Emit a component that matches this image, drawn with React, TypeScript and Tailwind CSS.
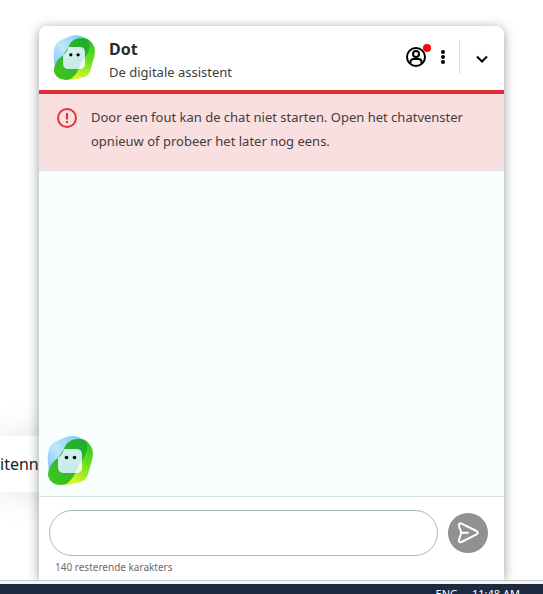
import { useState } from "react"

const MAX_LENGTH = 140

function DotAvatar({ id, className }: { id: string; className: string }) {
    return (
        <svg viewBox="0 0 46 50" className={className} role="img" aria-label="Dot">
            <defs>
                <linearGradient id={`${id}-sky`} x1="0" y1="0.7" x2="0.8" y2="0">
                    <stop offset="0" stopColor="#8fc8ff" />
                    <stop offset="0.4" stopColor="#bfe6fb" />
                    <stop offset="1" stopColor="#86cdf4" />
                </linearGradient>
                <linearGradient id={`${id}-lime`} x1="0.8" y1="0" x2="0.5" y2="1">
                    <stop offset="0" stopColor="#2fc02a" />
                    <stop offset="0.5" stopColor="#6ae01c" />
                    <stop offset="1" stopColor="#dcf828" />
                </linearGradient>
                <linearGradient id={`${id}-leaf`} x1="0" y1="1" x2="1" y2="0">
                    <stop offset="0" stopColor="#42c81c" />
                    <stop offset="0.6" stopColor="#2db42a" />
                    <stop offset="1" stopColor="#1cab30" />
                </linearGradient>
                <linearGradient id={`${id}-face`} x1="0" y1="0" x2="0.7" y2="1">
                    <stop offset="0" stopColor="#d8f3ee" />
                    <stop offset="1" stopColor="#c2eae8" />
                </linearGradient>
            </defs>
            <path d="M2 40C2 30 0 24 1 18C2 11 4 7 10 5C16 2 20 0 25 0C31 0 34 2 37 5L34 22L12 38Z" fill={`url(#${id}-sky)`} />
            <path d="M31 3C37 2 41 6 43 9C47 14 46 19 45 24C44 28 43 31 42 35C40 42 38 45 33 46C27 48 21 49 14 49L20 33L33 14Z" fill={`url(#${id}-lime)`} />
            <path d="M17 13C19 6 25 3 31 3C37 3 41 7 40 13C39 19 37 22 35 24C33 29 30 34 27 39C24 45 20 49 14 49C6 49 1 44 1 38C2 31 5 26 11 22Z" fill={`url(#${id}-leaf)`} />
            <path d="M17 13H29C33 13 35 15 35 19V31C35 35 33 37 29 37H18C13 37 11 35 11 31V22C14 20 16 17 17 13Z" fill={`url(#${id}-face)`} />
            <path d="M35 24V31C35 35 33 37 29 37H28C30 33 32 28 35 24Z" fill="#effbe2" />
            <circle cx="19.5" cy="21.5" r="1.8" />
            <circle cx="27.5" cy="21.5" r="1.8" />
        </svg>
    )
}

function ChatHeader() {
    return (
        <header className="flex h-16 items-center px-3.5">
            <DotAvatar id="header" className="h-[46px] w-[42px]" />
            <div className="ml-3.5 flex-1 pt-1">
                <h1 className="text-base leading-6 font-bold text-[#2b2b2b]">Dot</h1>
                <p className="text-[13px] leading-[22px] text-[#3c3c3c]">De digitale assistent</p>
            </div>
            <div className="flex items-center pb-0.5">
                <button type="button" aria-label="Profiel" className="relative">
                    <svg viewBox="0 0 22 22" className="size-[22px]" fill="none" stroke="#000" strokeWidth="2">
                        <circle cx="11" cy="11" r="9" />
                        <circle cx="11" cy="8" r="3" />
                        <path d="M5.500 17.500V16C5.500 14.300 6.800 13 8.500 13H13.500C15.200 13 16.500 14.300 16.500 16V17.500" />
                    </svg>
                    <span className="absolute -top-0.5 -right-1 size-2 rounded-full bg-[#fb0007]" />
                </button>
                <button type="button" aria-label="Meer opties" className="ml-3">
                    <svg viewBox="0 0 8 16" className="h-4 w-2">
                        <circle cx="4" cy="3" r="2" />
                        <circle cx="4" cy="8" r="2" />
                        <circle cx="4" cy="13" r="2" />
                    </svg>
                </button>
                <div className="ml-3 h-[34px] w-px bg-[#dcdcdc]" />
                <button type="button" aria-label="Chat verkleinen" className="ml-3.5 pt-1">
                    <svg viewBox="0 0 16 16" className="size-4" fill="none" stroke="#000" strokeWidth="2">
                        <path d="M3 5.500L8 10.500L13 5.500" />
                    </svg>
                </button>
            </div>
        </header>
    )
}

function ErrorBanner() {
    return (
        <div role="alert" className="flex gap-3.5 border-t-4 border-b border-t-[#e22d33] border-b-[#dbe0e2] bg-[#fadfe0] pt-[11px] pr-6 pb-[17px] pl-[18px]">
            <svg viewBox="0 0 20 20" className="mt-[3px] size-5 shrink-0" fill="none" stroke="#dc3438" strokeWidth="2">
                <circle cx="10" cy="10" r="9" />
                <path d="M10 5V11.500M10 13V15" />
            </svg>
            <p className="text-[13px] leading-6 text-[#443c3d]">
                Door een fout kan de chat niet starten. Open het chatvenster opnieuw of probeer het later nog eens.
            </p>
        </div>
    )
}

function MessageForm() {
    const [message, setMessage] = useState("")

    return (
        <form className="border-t border-[#d5e0e0] px-2.5 pt-[13px] pb-[5px]" onSubmit={(e) => e.preventDefault()}>
            <div className="flex items-center gap-2.5 pr-1.5">
                <input
                    type="text"
                    aria-label="Typ je bericht"
                    maxLength={MAX_LENGTH}
                    value={message}
                    onChange={(e) => setMessage(e.target.value)}
                    className="h-[46px] min-w-0 flex-1 rounded-full border border-[#a9bab7] bg-white px-5 text-sm outline-none"
                />
                <button type="submit" aria-label="Versturen" className="flex size-10 items-center justify-center rounded-full bg-[#919191]">
                    <svg viewBox="0 0 22 22" className="size-[22px]" fill="none" stroke="#fff" strokeWidth="2" strokeLinecap="round" strokeLinejoin="round">
                        <path d="M4.500 1.600L19.500 9C21.200 10 21.200 11.500 19.500 12.400L4.500 20C2.600 20.800 1.500 19.500 2 17.800L3.800 12.500Q4.300 10.800 3.800 9L2 4C1.500 2 2.700 0.900 4.500 1.600ZM4.300 10.800H11" />
                    </svg>
                </button>
            </div>
            <p className="pl-1.5 pt-[3px] text-[10px] leading-4 text-[#6c6c6c]">{MAX_LENGTH - message.length} resterende karakters</p>
        </form>
    )
}

export default function App() {
    return (
        <div className="flex h-screen flex-col overflow-hidden bg-white font-['Noto_Sans',sans-serif]">
            <main className="relative flex flex-1 flex-col overflow-hidden px-[39px] pt-[26px]">
                {/* Page card that sticks out from under the chat window */}
                <div className="absolute bottom-[88px] left-0 flex h-14 w-24 items-center bg-white text-base text-[#222] shadow-[0_0_36px_rgba(0,0,0,0.12)]">
                    itenn
                </div>
                <section className="relative flex flex-1 flex-col overflow-clip rounded-t-lg bg-white shadow-[0_2px_12px_rgba(0,0,0,0.4)]">
                    <ChatHeader />
                    <ErrorBanner />
                    <div className="flex flex-1 items-end bg-[#f8fefe] px-2 pb-2.5">
                        <DotAvatar id="body" className="h-[50px] w-[46px]" />
                    </div>
                    <MessageForm />
                </section>
            </main>
            <div className="h-1 border-t border-[#c9c9c9] bg-[#f4f4f4]" />
            <footer className="flex h-2.5 justify-end gap-3.5 overflow-hidden bg-[#1b2a41] pr-[23px] text-[11px] leading-5 text-white">
                <span>ENG</span>
                <time>11:48 AM</time>
            </footer>
        </div>
    )
}
